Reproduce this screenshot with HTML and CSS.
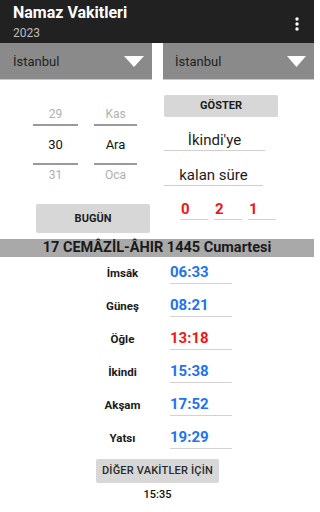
FILE: index.html
```html
<!DOCTYPE html>
<html lang="tr">
<head>
<meta charset="utf-8">
<title>Namaz Vakitleri</title>
<link rel="stylesheet" href="styles.css">
</head>
<body>
<div class="app">
  <header class="toolbar">
    <div class="titles">
      <div class="title">Namaz Vakitleri</div>
      <div class="subtitle">2023</div>
    </div>
    <svg class="menu" width="4" height="14" viewBox="0 0 4 14"><circle cx="2" cy="2" r="1.7" fill="#fff"/><circle cx="2" cy="7" r="1.7" fill="#fff"/><circle cx="2" cy="12" r="1.7" fill="#fff"/></svg>
  </header>

  <div class="spinners">
    <div class="spinner"><span>İstanbul</span><svg class="tri" width="20" height="11" viewBox="0 0 20 11"><polygon points="0,0 20,0 10,11" fill="#fff"/></svg></div>
    <div class="spinner right"><span>İstanbul</span><svg class="tri" width="19" height="11" viewBox="0 0 19 11"><polygon points="0,0 19,0 9.5,11" fill="#fff"/></svg></div>
  </div>

  <div class="main">
    <div class="left">
      <div class="picker">
        <div class="pcol day">
          <div class="pitem faded">29</div>
          <div class="pitem current">30</div>
          <div class="pitem faded">31</div>
        </div>
        <div class="pcol month">
          <div class="pitem faded">Kas</div>
          <div class="pitem current">Ara</div>
          <div class="pitem faded">Oca</div>
        </div>
      </div>
      <div class="btn today">BUGÜN</div>
    </div>
    <div class="right-col">
      <div class="btn show">GÖSTER</div>
      <div class="field first">İkindi'ye</div>
      <div class="field second">kalan süre</div>
      <div class="digits">
        <div class="digit">0</div>
        <div class="digit">2</div>
        <div class="digit">1</div>
      </div>
    </div>
  </div>

  <div class="band">17 CEMÂZİL-ÂHIR 1445 Cumartesi</div>

  <div class="times">
    <div class="row"><div class="label">İmsâk</div><div class="time">06:33</div></div>
    <div class="row"><div class="label">Güneş</div><div class="time">08:21</div></div>
    <div class="row"><div class="label">Öğle</div><div class="time red">13:18</div></div>
    <div class="row"><div class="label">İkindi</div><div class="time">15:38</div></div>
    <div class="row"><div class="label">Akşam</div><div class="time">17:52</div></div>
    <div class="row"><div class="label">Yatsı</div><div class="time">19:29</div></div>
  </div>

  <div class="bottom">
    <div class="btn other">DİĞER VAKİTLER İÇİN</div>
    <div class="clock">15:35</div>
  </div>
</div>
</body>
</html>
```

FILE: styles.css
```css
* { box-sizing: border-box; }
html, body { margin: 0; padding: 0; background: #fff; }
body { font-family: Roboto, "Noto Sans", "Liberation Sans", sans-serif; color: #222; }
.app { width: 314px; height: 512px; overflow: hidden; }

.toolbar {
  height: 43px;
  background: #212121;
  display: flex;
  align-items: flex-start;
  justify-content: space-between;
  padding: 3px 15px 0 13px;
}
.title { color: #fff; font-size: 16px; font-weight: 700; line-height: 20px; }
.subtitle { color: #bdbdbd; font-size: 12px; line-height: 14px; margin-top: 3px; }
.menu { margin-top: 14px; }

.spinners { display: flex; gap: 11px; }
.spinner {
  flex: 0 0 152px;
  height: 37px;
  background: #8a8a8a;
  border-bottom: 1px solid #c9c9c9;
  display: flex;
  align-items: center;
  justify-content: space-between;
  padding: 0 8px 0 13px;
  font-size: 13px;
  color: #1f1f1f;
}
.spinner.right { flex: 1; padding-left: 12px; }

.main { display: flex; }
.left { width: 163px; }
.right-col { flex: 1; padding-left: 1px; }

.picker { display: flex; gap: 16px; padding-left: 33px; margin-top: 24px; }
.pcol { width: 45px; text-align: center; }
.pcol.month { width: 43px; }
.pitem { font-size: 12px; }
.pitem.faded { color: #b0b0b0; line-height: 20px; height: 20px; }
.pitem.current {
  color: #111;
  font-size: 13px;
  height: 41px;
  line-height: 38px;
  border-top: 2px solid #9a9a9a;
  border-bottom: 2px solid #9a9a9a;
}

.btn {
  background: #d7d7d7;
  border-radius: 2px;
  font-weight: 700;
  text-align: center;
  color: #1c1c1c;
}
.btn.today { margin: 19px 0 0 36px; width: 114px; height: 29px; line-height: 29px; font-size: 11px; }
.btn.show { margin-top: 15px; width: 114px; height: 22px; line-height: 22px; font-size: 11px; }

.field {
  width: 101px;
  text-align: center;
  font-size: 15px;
  color: #1c1c1c;
  border-bottom: 1px solid #cfcfcf;
}
.field.first { margin-top: 10px; height: 24px; line-height: 27px; }
.field.second { margin-top: 10px; height: 25px; line-height: 28px; width: 99px; }

.digits { display: flex; gap: 6px; margin: 11px 0 0 16px; }
.digit {
  width: 28px;
  height: 23px;
  line-height: 24px;
  padding-left: 1px;
  border-bottom: 1px solid #cfcfcf;
  color: #f21414;
  font-weight: 700;
  font-size: 15px;
}

.band {
  margin-top: 6px;
  height: 18px;
  line-height: 18px;
  background: #a9a9a9;
  text-align: center;
  font-weight: 700;
  font-size: 14.5px;
  color: #1a1a1a;
}

.times { display: flex; flex-direction: column; gap: 10px; padding-top: 4px; }
.row { display: flex; height: 23px; }
.label {
  width: 165px;
  padding-left: 80px;
  text-align: center;
  font-size: 11.5px;
  font-weight: 700;
  line-height: 25px;
  color: #1a1a1a;
}
.time {
  margin-left: 5px;
  width: 62px;
  height: 23px;
  line-height: 22px;
  border-bottom: 1px solid #d3d3d3;
  color: #1e73f0;
  font-weight: 700;
  font-size: 15px;
}
.time.red { color: #f01616; }

.bottom { display: flex; flex-direction: column; align-items: center; padding-left: 1px; }
.btn.other {
  margin-top: 10px;
  width: 123px;
  height: 24px;
  line-height: 24px;
  font-size: 11px;
  font-weight: 500;
  color: #2a2a2a;
  letter-spacing: 0.2px;
}
.clock { margin-top: 5px; font-size: 11px; font-weight: 500; line-height: 14px; color: #111; }
```
